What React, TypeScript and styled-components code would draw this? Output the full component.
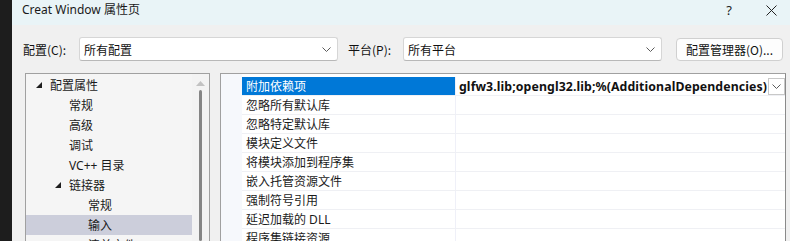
import styled, { createGlobalStyle } from "styled-components";

const GlobalStyle = createGlobalStyle`
  html, body {
    margin: 0;
    padding: 0;
    background: #f0f0f0;
  }
  body {
    font-family: "Noto Sans", "Noto Sans CJK SC", sans-serif;
    font-size: 12px;
    color: #1b1b1b;
  }
`;

const CJK = `"Noto Sans CJK SC", "Noto Sans", sans-serif`;

type TreeItem = { label: string; level: number; expander?: boolean; selected?: boolean };

const treeItems: TreeItem[] = [
  { label: "配置属性", level: 0, expander: true },
  { label: "常规", level: 1 },
  { label: "高级", level: 1 },
  { label: "调试", level: 1 },
  { label: "VC++ 目录", level: 1 },
  { label: "链接器", level: 1, expander: true },
  { label: "常规", level: 2 },
  { label: "输入", level: 2, selected: true },
  { label: "清单文件", level: 2 },
];

const gridRows = [
  "附加依赖项",
  "忽略所有默认库",
  "忽略特定默认库",
  "模块定义文件",
  "将模块添加到程序集",
  "嵌入托管资源文件",
  "强制符号引用",
  "延迟加载的 DLL",
  "程序集链接资源",
];

const Chevron = () => (
  <svg width="9" height="5" viewBox="0 0 9 5">
    <path d="M0.5 0.5 L4.5 4.5 L8.5 0.5" fill="none" stroke="#5a5a5a" strokeWidth="1" />
  </svg>
);

const App = () => {
  return (
    <Page>
      <GlobalStyle />
      <DesktopEdge />
      <Window>
        <TitleBar>
          <Title>Creat Window 属性页</Title>
          <TitleButtons>
            <HelpGlyph>?</HelpGlyph>
            <svg width="11" height="11" viewBox="0 0 11 11">
              <path d="M0.5 0.5 L10.5 10.5 M10.5 0.5 L0.5 10.5" stroke="#222" strokeWidth="1" />
            </svg>
          </TitleButtons>
        </TitleBar>

        <ConfigRow>
          <FieldLabel $width={56}>配置(C):</FieldLabel>
          <Combo>
            <span>所有配置</span>
            <Chevron />
          </Combo>
          <FieldLabel $width={55} $gap={10}>平台(P):</FieldLabel>
          <Combo>
            <span>所有平台</span>
            <Chevron />
          </Combo>
          <ManagerButton>配置管理器(O)...</ManagerButton>
        </ConfigRow>

        <Main>
          <TreePanel>
            <TreeList>
              {treeItems.map((item, i) => (
                <TreeRow key={i} $selected={item.selected}>
                  <Indent $level={item.level}>
                    {item.expander && (
                      <Expander width="6" height="6" viewBox="0 0 6 6">
                        <path d="M6 0 L6 6 L0 6 Z" fill="#1e1e1e" />
                      </Expander>
                    )}
                  </Indent>
                  <TreeLabel>{item.label}</TreeLabel>
                </TreeRow>
              ))}
            </TreeList>
            <ScrollBar>
              <svg width="9" height="5" viewBox="0 0 9 5">
                <path d="M4.5 0 L9 5 L0 5 Z" fill="#c2c2c2" />
              </svg>
              <Thumb />
            </ScrollBar>
          </TreePanel>

          <GridPanel>
            <Margin />
            <GridBody>
              {gridRows.map((name, i) => (
                <GridRow key={i}>
                  <NameCell $active={i === 0}>{name}</NameCell>
                  <ValueCell>
                    {i === 0 && (
                      <>
                        <ValueText>glfw3.lib;opengl32.lib;%(AdditionalDependencies)</ValueText>
                        <DropButton>
                          <Chevron />
                        </DropButton>
                      </>
                    )}
                  </ValueCell>
                </GridRow>
              ))}
            </GridBody>
          </GridPanel>
        </Main>
      </Window>
    </Page>
  );
};

const Page = styled.div`
  display: flex;
  width: 790px;
  height: 241px;
  overflow: hidden;
`;

const DesktopEdge = styled.div`
  width: 12px;
  flex-shrink: 0;
  background: #1d1d1d;
`;

const Window = styled.div`
  flex: 1;
  display: flex;
  flex-direction: column;
  background: #f0f0f0;
`;

const TitleBar = styled.div`
  height: 25px;
  flex-shrink: 0;
  display: flex;
  justify-content: space-between;
  align-items: flex-start;
  padding: 1px 13px 0 10px;
  box-sizing: border-box;
  background: #e9f4f7;
`;

const Title = styled.div`
  font-family: "Noto Sans", ${CJK};
  font-size: 12px;
  line-height: 18px;
  color: #1a1a1a;
`;

const TitleButtons = styled.div`
  display: flex;
  align-items: center;
  gap: 34px;
  padding-top: 4px;
`;

const HelpGlyph = styled.span`
  font-family: "Noto Sans", sans-serif;
  font-size: 13px;
  line-height: 11px;
  color: #222;
`;

const ConfigRow = styled.div`
  display: flex;
  align-items: center;
  height: 24px;
  margin-top: 12px;
  padding-left: 11px;
`;

const FieldLabel = styled.div<{ $width: number; $gap?: number }>`
  width: ${(p) => p.$width}px;
  margin-left: ${(p) => p.$gap ?? 0}px;
  flex-shrink: 0;
  font-family: ${CJK};
  font-size: 12px;
  color: #111;
`;

const Combo = styled.div`
  width: 259px;
  height: 24px;
  box-sizing: border-box;
  display: flex;
  align-items: center;
  justify-content: space-between;
  padding: 0 6px 0 4px;
  background: #ffffff;
  border: 1px solid #d6d6d6;
  border-bottom-color: #b8b8b8;
  border-radius: 3px;
  font-family: ${CJK};
  font-size: 12px;
  color: #111;
`;

const ManagerButton = styled.div`
  margin-left: 14px;
  width: 107px;
  height: 23px;
  box-sizing: border-box;
  display: flex;
  align-items: center;
  justify-content: center;
  background: #fdfdfd;
  border: 1px solid #d0d0d0;
  border-radius: 4px;
  font-family: ${CJK};
  font-size: 12px;
  color: #111;
`;

const Main = styled.div`
  flex: 1;
  display: flex;
  gap: 10px;
  margin: 12px 4px 0 13px;
  min-height: 0;
`;

const TreePanel = styled.div`
  width: 185px;
  box-sizing: border-box;
  display: flex;
  border: 1px solid #a0a0a0;
  border-bottom: none;
  background: #f5f5f5;
`;

const TreeList = styled.div`
  flex: 1;
  padding-top: 1px;
`;

const TreeRow = styled.div<{ $selected?: boolean }>`
  display: flex;
  align-items: center;
  height: 20px;
  background: ${(p) => (p.$selected ? "#cccedb" : "transparent")};
`;

const Indent = styled.div<{ $level: number }>`
  width: ${(p) => 24 + p.$level * 19}px;
  flex-shrink: 0;
  display: flex;
  justify-content: flex-end;
  padding-right: 8px;
  box-sizing: border-box;
`;

const Expander = styled.svg`
  display: block;
`;

const TreeLabel = styled.span`
  font-family: "Noto Sans", ${CJK};
  font-size: 12px;
  color: #1b1b1b;
  white-space: nowrap;
`;

const ScrollBar = styled.div`
  width: 17px;
  flex-shrink: 0;
  display: flex;
  flex-direction: column;
  align-items: center;
  padding-top: 7px;
  gap: 4px;
  background: #f3f3f3;
`;

const Thumb = styled.div`
  width: 3px;
  flex: 1;
  border-radius: 2px;
  background: #858585;
`;

const GridPanel = styled.div`
  flex: 1;
  display: flex;
  border-left: 1px solid #a0a0a0;
  border-top: 1px solid #a0a0a0;
  border-right: 1px solid #8a8a8a;
  background: #ffffff;
`;

const Margin = styled.div`
  width: 21px;
  flex-shrink: 0;
  background: #f6f8fc;
`;

const GridBody = styled.div`
  flex: 1;
  padding-top: 3px;
`;

const GridRow = styled.div`
  display: flex;
  height: 18px;
  border-bottom: 1px solid #eff0f4;
`;

const NameCell = styled.div<{ $active?: boolean }>`
  width: 214px;
  flex-shrink: 0;
  display: flex;
  align-items: center;
  padding-left: 4px;
  box-sizing: border-box;
  border-right: 1px solid #eff0f8;
  background: ${(p) => (p.$active ? "#0078d7" : "transparent")};
  color: ${(p) => (p.$active ? "#ffffff" : "#1b1b1b")};
  font-family: "Noto Sans", ${CJK};
  font-size: 12px;
  white-space: nowrap;
`;

const ValueCell = styled.div`
  flex: 1;
  display: flex;
  align-items: center;
  justify-content: space-between;
  padding-left: 3px;
`;

const ValueText = styled.span`
  font-family: "Noto Sans", sans-serif;
  font-weight: 700;
  font-size: 12.3px;
  letter-spacing: 0.1px;
  color: #111;
  white-space: nowrap;
`;

const DropButton = styled.div`
  width: 17px;
  height: 17px;
  box-sizing: border-box;
  display: flex;
  align-items: center;
  justify-content: center;
  border: 1px solid #c8c8c8;
  background: #ffffff;
`;

export default App;
